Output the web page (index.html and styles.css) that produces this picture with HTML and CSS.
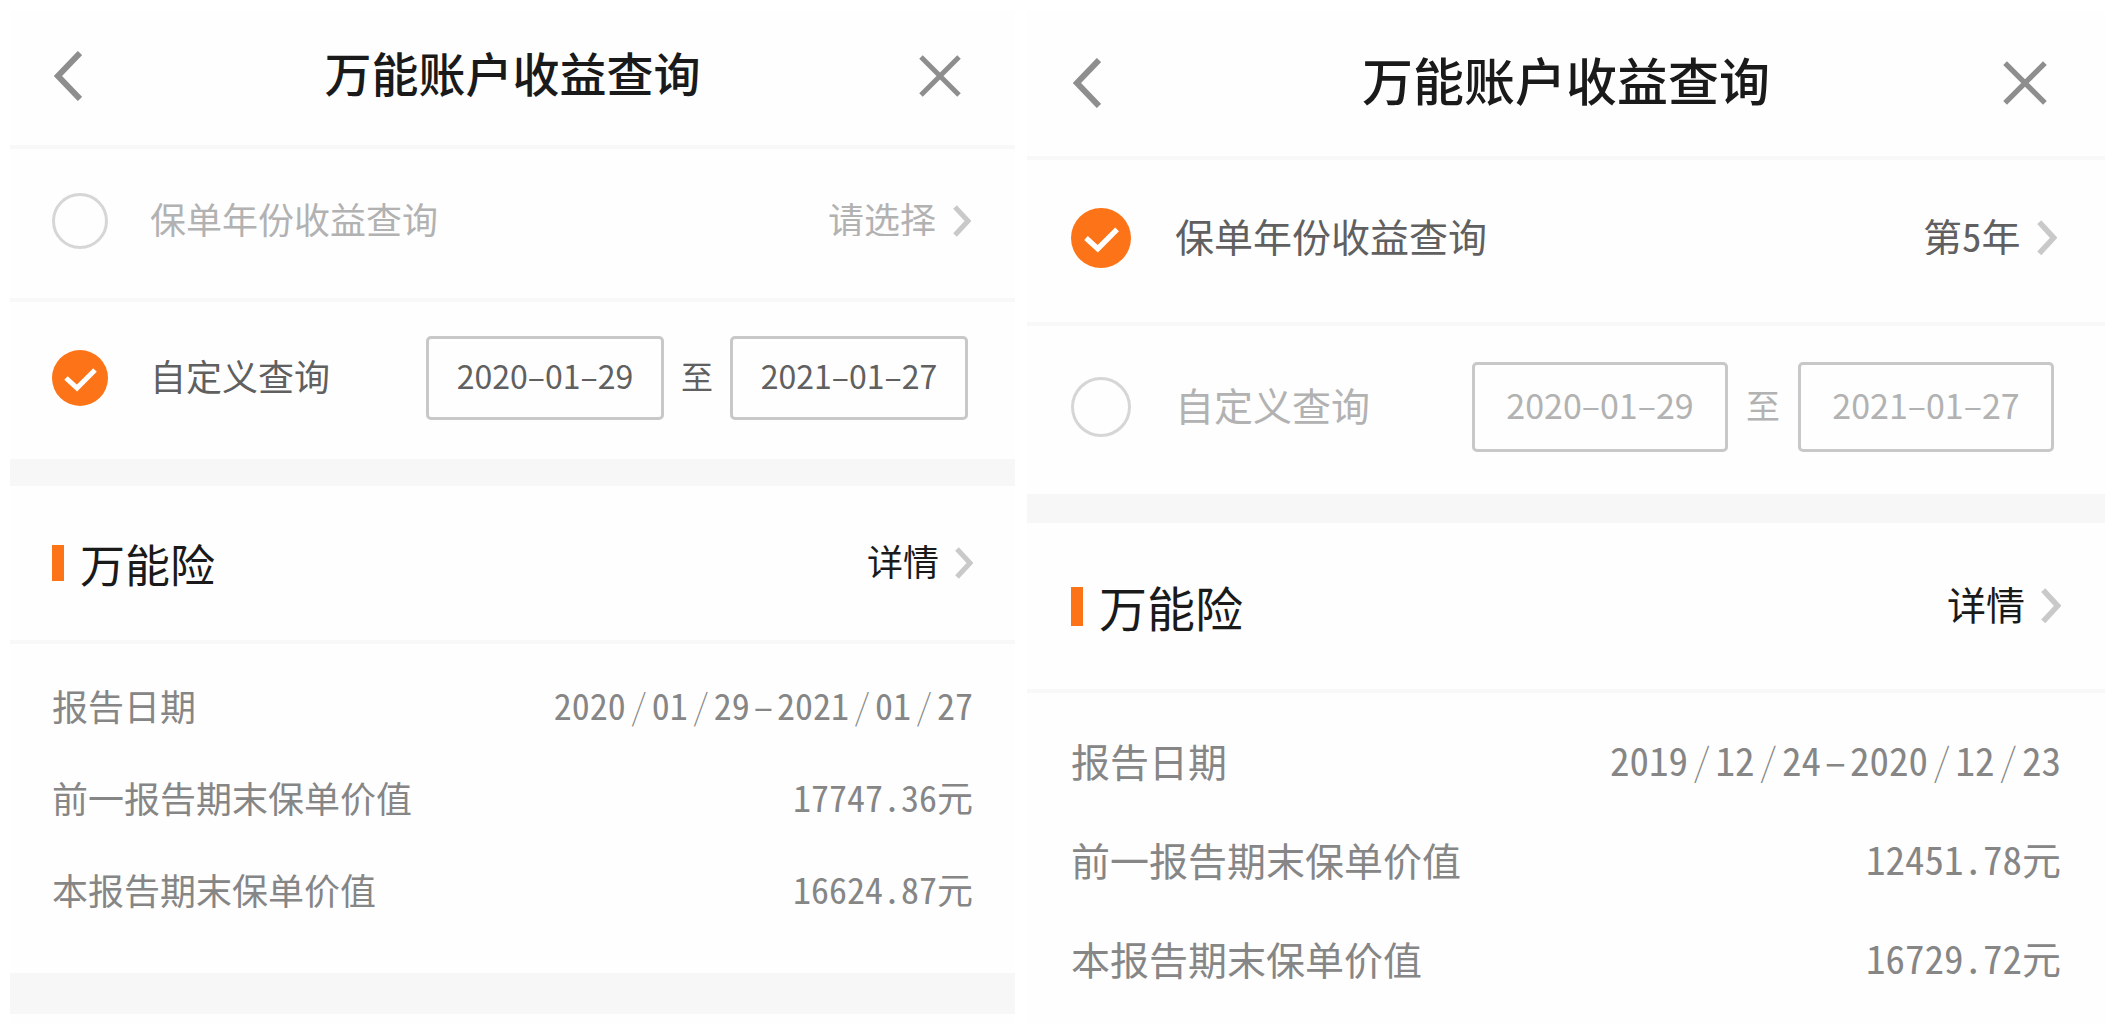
FILE: index.html
```html
<!DOCTYPE html>
<html lang="zh-CN">
<head>
<meta charset="utf-8">
<meta name="viewport" content="width=device-width, initial-scale=1">
<title>万能账户收益查询</title>
<link rel="stylesheet" href="styles.css">
</head>
<body>
<main class="screens">
  <section class="panel panel-small">
    <header class="topbar">
      <button class="icon-button back" type="button" aria-label="返回"><svg class="icon-back" viewBox="0 0 28 50"><path d="M26 2 4 25 26 48"/></svg></button>
      <h1 class="title">万能账户收益查询</h1>
      <button class="icon-button close" type="button" aria-label="关闭"><svg class="icon-close" viewBox="0 0 42 42"><path d="M2 2 40 40M40 2 2 40"/></svg></button>
    </header>
    <div class="option muted">
      <label class="choice"><span class="radio"><input type="radio" name="mode-a"><svg class="tick" viewBox="0 0 56 56"><path d="M14 28 25 38 43 20"/></svg></span><span class="caption">保单年份收益查询</span></label>
      <div class="picker"><select class="year caption" aria-label="保单年份"><option>请选择</option></select><svg class="arrow" viewBox="0 0 18 32"><path d="M2 2 15 16 2 30"/></svg></div>
    </div>
    <div class="option option-dates">
      <label class="choice"><span class="radio"><input type="radio" name="mode-a" checked><svg class="tick" viewBox="0 0 56 56"><path d="M14 28 25 38 43 20"/></svg></span><span class="caption">自定义查询</span></label>
      <div class="range"><input class="date caption" type="text" value="2020–01–29" aria-label="开始日期"><span class="caption">至</span><input class="date caption" type="text" value="2021–01–27" aria-label="结束日期"></div>
    </div>
    <div class="section-head">
      <h2 class="product">万能险</h2>
      <a class="details" href="#"><span class="caption">详情</span><svg class="arrow" viewBox="0 0 18 32"><path d="M2 2 15 16 2 30"/></svg></a>
    </div>
    <dl class="report">
      <div class="line"><dt>报告日期</dt><dd>2020<span class="slash">/</span>01<span class="slash">/</span>29<span class="dash">–</span>2021<span class="slash">/</span>01<span class="slash">/</span>27</dd></div>
      <div class="line"><dt>前一报告期末保单价值</dt><dd>17747.36元</dd></div>
      <div class="line"><dt>本报告期末保单价值</dt><dd>16624.87元</dd></div>
    </dl>
    <div class="footer-band"></div>
  </section>

  <section class="panel panel-large">
    <header class="topbar">
      <button class="icon-button back" type="button" aria-label="返回"><svg class="icon-back" viewBox="0 0 28 50"><path d="M26 2 4 25 26 48"/></svg></button>
      <h1 class="title">万能账户收益查询</h1>
      <button class="icon-button close" type="button" aria-label="关闭"><svg class="icon-close" viewBox="0 0 42 42"><path d="M2 2 40 40M40 2 2 40"/></svg></button>
    </header>
    <div class="option">
      <label class="choice"><span class="radio"><input type="radio" name="mode-b" checked><svg class="tick" viewBox="0 0 56 56"><path d="M14 28 25 38 43 20"/></svg></span><span class="caption">保单年份收益查询</span></label>
      <div class="picker"><select class="year caption" aria-label="保单年份"><option>第5年</option></select><svg class="arrow" viewBox="0 0 18 32"><path d="M2 2 15 16 2 30"/></svg></div>
    </div>
    <div class="option option-dates muted">
      <label class="choice"><span class="radio"><input type="radio" name="mode-b"><svg class="tick" viewBox="0 0 56 56"><path d="M14 28 25 38 43 20"/></svg></span><span class="caption">自定义查询</span></label>
      <div class="range"><input class="date caption" type="text" value="2020–01–29" aria-label="开始日期"><span class="caption">至</span><input class="date caption" type="text" value="2021–01–27" aria-label="结束日期"></div>
    </div>
    <div class="section-head">
      <h2 class="product">万能险</h2>
      <a class="details" href="#"><span class="caption">详情</span><svg class="arrow" viewBox="0 0 18 32"><path d="M2 2 15 16 2 30"/></svg></a>
    </div>
    <dl class="report">
      <div class="line"><dt>报告日期</dt><dd>2019<span class="slash">/</span>12<span class="slash">/</span>24<span class="dash">–</span>2020<span class="slash">/</span>12<span class="slash">/</span>23</dd></div>
      <div class="line"><dt>前一报告期末保单价值</dt><dd>12451.78元</dd></div>
      <div class="line"><dt>本报告期末保单价值</dt><dd>16729.72元</dd></div>
    </dl>
  </section>
</main>
</body>
</html>
```
FILE: styles.css
```css
* {
  box-sizing: border-box;
}

body {
  margin: 0;
  background: #fff;
  color: #606060;
  font-family: "Noto Sans CJK SC", "Noto Sans", sans-serif;
}

.screens {
  display: grid;
  grid-template-columns: 1005fr 1078fr;
  gap: 12px;
  padding: 10px;
}

.panel {
  background: #fefefe;
  font-size: var(--text);
}

.panel-small {
  --text: 36px;
  --title: 47px;
  --product: 45px;
  --date: 32px;
  --pad: 42px;
  --radio: 56px;
  --label-gap: 42px;
  --topbar: 139px;
  --row: 153px;
  --row-dates: 157px;
  --section: 185px;
  --band: 27px;
  --line: 92px;
  --report-top: 15px;
  --report-bottom: 38px;
  --date-width: 238px;
  --date-height: 84px;
  --date-gap: 17px;
  --range-end: 47px;
  --picker-end: 2px;
  --close: 42px;
  --close-end: 12px;
  --topbar-bottom: 4px;
  --arrow-width: 18px;
  --mark: 36px;
}

.panel-large {
  --text: 39px;
  --title: 51px;
  --product: 48px;
  --date: 34px;
  --pad: 44px;
  --radio: 60px;
  --label-gap: 44px;
  --topbar: 150px;
  --row: 166px;
  --row-dates: 168px;
  --section: 199px;
  --band: 29px;
  --line: 99px;
  --report-top: 18px;
  --report-bottom: 38px;
  --date-width: 256px;
  --date-height: 90px;
  --date-gap: 18px;
  --range-end: 51px;
  --picker-end: 4px;
  --close: 44px;
  --close-end: 14px;
  --topbar-bottom: 0;
  --arrow-width: 20px;
  --mark: 39px;
}

/* Lifts text to the optical centre of its row */
.caption {
  padding: 0 0 6px;
}

/* Title bar */
.topbar {
  display: grid;
  grid-template-columns: 1fr auto 1fr;
  align-items: center;
  min-height: var(--topbar);
  padding: 0 var(--pad) var(--topbar-bottom);
  border-bottom: 4px solid #f8f8f8;
}

.title {
  margin: 0;
  padding-bottom: 8px;
  color: #1a1a1a;
  font-size: var(--title);
  font-weight: 500;
  line-height: 1;
}

.icon-button {
  display: flex;
  padding: 0;
  border: 0;
  background: none;
}

.back {
  margin-left: 2px;
}

.close {
  justify-self: end;
  margin-right: var(--close-end);
}

.icon-back,
.icon-close {
  fill: none;
  stroke: #8e8e8e;
  stroke-width: 6;
}

.icon-back {
  height: 50px;
}

.icon-close {
  height: var(--close);
  stroke-width: 5;
}

/* Query modes */
.option {
  display: flex;
  align-items: center;
  justify-content: space-between;
  min-height: var(--row);
  padding: 0 var(--pad) 6px;
  border-bottom: 4px solid #f8f8f8;
}

.option-dates {
  min-height: var(--row-dates);
  padding-right: var(--range-end);
  border-bottom: 0;
}

.muted {
  color: #b2b2b2;
}

.choice {
  display: flex;
  align-items: center;
  gap: var(--label-gap);
  line-height: 1;
}

.radio {
  display: grid;
}

.radio input,
.tick {
  grid-area: 1 / 1;
  width: var(--radio);
  height: var(--radio);
  margin: 0;
}

.radio input {
  appearance: none;
  border: 3px solid #d6d6d6;
  border-radius: 50%;
}

.radio input:checked {
  border: 0;
  background: #fd7317;
}

.tick {
  visibility: hidden;
  fill: none;
  stroke: #fff;
  stroke-width: 5;
}

input:checked + .tick {
  visibility: visible;
}

.picker,
.details {
  display: flex;
  align-items: center;
  gap: 16px;
  line-height: 1;
}

.picker {
  margin-right: var(--picker-end);
}

.year {
  appearance: none;
  border: 0;
  background: none;
  color: inherit;
  font: inherit;
  font-feature-settings: "hwid";
}

.arrow {
  width: var(--arrow-width);
  fill: none;
  stroke: #c9c9c9;
  stroke-width: 5;
}

.range {
  display: flex;
  align-items: center;
  gap: var(--date-gap);
  font-size: var(--date);
}

.date {
  width: var(--date-width);
  height: var(--date-height);
  border: 3px solid #c8c8c8;
  border-radius: 5px;
  background: none;
  color: inherit;
  font: inherit;
  text-align: center;
}

/* Product summary */
.section-head {
  display: flex;
  align-items: center;
  justify-content: space-between;
  min-height: var(--section);
  padding: 0 var(--pad);
  border-top: var(--band) solid #f7f7f7;
  border-bottom: 4px solid #f8f8f8;
}

.product {
  display: flex;
  align-items: center;
  gap: 16px;
  margin: 0;
  color: #1a1a1a;
  font-size: var(--product);
  font-weight: 400;
  line-height: 1;
}

.product::before {
  width: 12px;
  height: var(--mark);
  background: #fd7317;
  content: "";
}

.details {
  color: #1a1a1a;
  text-decoration: none;
}

.report {
  margin: 0;
  padding: var(--report-top) var(--pad) var(--report-bottom);
  color: #868686;
}

.line {
  display: flex;
  align-items: center;
  justify-content: space-between;
  min-height: var(--line);
  line-height: 1;
}

.line dd {
  margin: 0;
  padding-bottom: 2px;
  font-feature-settings: "hwid";
}

.slash,
.dash {
  padding: 0 4px;
}

.slash {
  font-weight: 100;
}

.footer-band {
  height: 41px;
  background: #f7f7f7;
}
```
